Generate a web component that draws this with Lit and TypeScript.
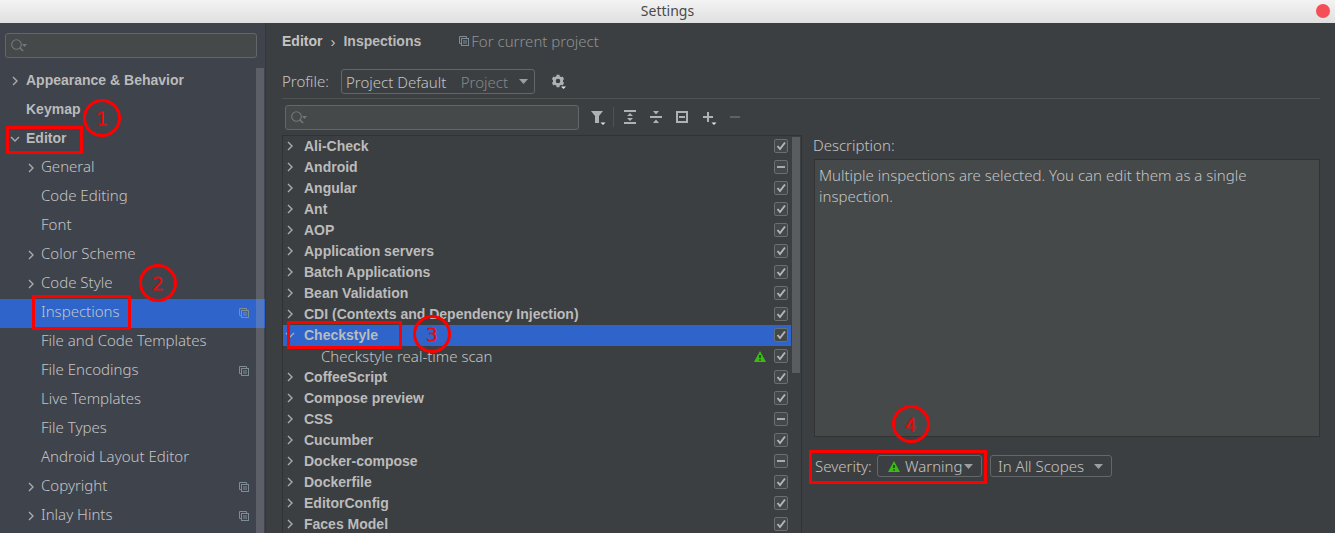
import { LitElement, html, css, svg, nothing } from "lit";
import { customElement, property } from "lit/decorators.js";
import { classMap } from "lit/directives/class-map.js";
import { live } from "lit/directives/live.js";

type NavItem = { label: string; level: 0 | 1; arrow?: "right" | "down"; project?: boolean; selected?: boolean };
type Inspection = { label: string; arrow?: "right" | "down"; partial?: boolean; selected?: boolean; warning?: boolean };

const NAV: NavItem[] = [
  { label: "Appearance & Behavior", level: 0, arrow: "right" },
  { label: "Keymap", level: 0 },
  { label: "Editor", level: 0, arrow: "down" },
  { label: "General", level: 1, arrow: "right" },
  { label: "Code Editing", level: 1 },
  { label: "Font", level: 1 },
  { label: "Color Scheme", level: 1, arrow: "right" },
  { label: "Code Style", level: 1, arrow: "right" },
  { label: "Inspections", level: 1, project: true, selected: true },
  { label: "File and Code Templates", level: 1 },
  { label: "File Encodings", level: 1, project: true },
  { label: "Live Templates", level: 1 },
  { label: "File Types", level: 1 },
  { label: "Android Layout Editor", level: 1 },
  { label: "Copyright", level: 1, arrow: "right", project: true },
  { label: "Inlay Hints", level: 1, arrow: "right", project: true },
];

const INSPECTIONS: Inspection[] = [
  { label: "Ali-Check", arrow: "right" },
  { label: "Android", arrow: "right", partial: true },
  { label: "Angular", arrow: "right" },
  { label: "Ant", arrow: "right" },
  { label: "AOP", arrow: "right" },
  { label: "Application servers", arrow: "right" },
  { label: "Batch Applications", arrow: "right" },
  { label: "Bean Validation", arrow: "right" },
  { label: "CDI (Contexts and Dependency Injection)", arrow: "right" },
  { label: "Checkstyle", arrow: "down", selected: true },
  { label: "Checkstyle real-time scan", warning: true },
  { label: "CoffeeScript", arrow: "right" },
  { label: "Compose preview", arrow: "right" },
  { label: "CSS", arrow: "right", partial: true },
  { label: "Cucumber", arrow: "right" },
  { label: "Docker-compose", arrow: "right", partial: true },
  { label: "Dockerfile", arrow: "right" },
  { label: "EditorConfig", arrow: "right" },
  { label: "Faces Model", arrow: "right" },
];

const icon = (w: number, h: number, body: unknown) =>
  html`<svg width=${w} height=${h} viewBox="0 0 ${w} ${h}" aria-hidden="true">${body}</svg>`;

const chevron = (dir: "right" | "down") =>
  icon(10, 10, svg`<path d=${dir === "right" ? "M3 1l4 4-4 4" : "M1 3l4 4 4-4"} fill="none" stroke="#a9abad" stroke-width="1.4"/>`);

const copyIcon = () =>
  icon(10, 10, svg`<g fill="none" stroke="#7f8b95"><path d="M2 7.5H.5v-7h7V2"/><rect x="2.5" y="2.5" width="7" height="7"/><path d="M4 5h4M4 7h4"/></g>`);

const searchIcon = () =>
  icon(17, 13, svg`<circle cx="5.5" cy="5.5" r="4.8" fill="none" stroke="#72797c" stroke-width="1.1"/><path d="M9 9l3 3" stroke="#72797c" stroke-width="1.6"/><path d="M11 5h5l-2.5 3z" fill="#72797c"/>`);

const warningIcon = () =>
  icon(12, 11, svg`<path d="M6 0l6 11H0z" fill="#3dbb15"/><path d="M6 4v3M6 8.3v1.5" stroke="#234d18" stroke-width="1.8"/>`);

const gearIcon = () =>
  icon(16, 16, svg`<g fill="none" stroke="#afb1b3"><circle cx="7" cy="7" r="3.7" stroke-width="2.8"/><path d="M7 .8v2M7 11.2v2M1.6 3.9l1.8 1M10.6 9.1l1.8 1M1.6 10.1l1.8-1M10.6 4.900l1.8-1" stroke-width="3"/></g><path d="M10 12.500h5l-2.500 2.500z" fill="#e3e4e5"/>`);

const filterIcon = () =>
  icon(16, 16, svg`<path d="M1 2h12L9 7v7H5V7z" fill="#afb1b3"/><path d="M10.500 13.500h5L13 16z" fill="#e3e4e5"/>`);

const expandIcon = () =>
  icon(14, 14, svg`<path d="M1 1h12M1 13h12" stroke="#afb1b3" stroke-width="2"/><path d="M7 3l3 3H4zM7 11l3-3H4z" fill="#afb1b3"/>`);

const collapseIcon = () =>
  icon(14, 14, svg`<path d="M1 7h12" stroke="#afb1b3" stroke-width="2"/><path d="M7 4.500l3-3.500H4zM7 9.500l3 3.500H4z" fill="#afb1b3"/>`);

const resetIcon = () =>
  icon(14, 14, svg`<rect x="2" y="2" width="10" height="10" fill="none" stroke="#afb1b3" stroke-width="2"/><path d="M4 7h6" stroke="#afb1b3" stroke-width="2"/>`);

const addIcon = () =>
  icon(16, 16, svg`<path d="M2 8h10M7 3v10" stroke="#afb1b3" stroke-width="2"/><path d="M10.500 13.500h5L13 16z" fill="#e3e4e5"/>`);

const removeIcon = () => icon(12, 12, svg`<path d="M1 6h10" stroke="#5f6263" stroke-width="2"/>`);

const caret = () => icon(9, 5, svg`<path d="M0 0h9L4.500 5z" fill="#9c9fa1"/>`);

@customElement("search-field")
class SearchField extends LitElement {
  @property() label = "Search";

  static styles = css`
    :host { display: block; }
    .field {
      display: flex;
      align-items: center;
      box-sizing: border-box;
      height: 25px;
      padding: 0 5px;
      border: 1px solid #646769;
      border-radius: 3px;
      background: #45494a;
    }
    input {
      flex: 1;
      min-width: 0;
      padding: 0 4px;
      border: 0;
      outline: 0;
      background: none;
      color: #bbbbbb;
      font: 300 15px "Noto Sans", sans-serif;
    }
  `;

  render() {
    return html`<div class="field">${searchIcon()}<input type="text" aria-label=${this.label} /></div>`;
  }
}

@customElement("select-box")
class SelectBox extends LitElement {
  @property() label = "";
  @property() value = "";
  @property() note = "";
  @property({ type: Boolean }) warning = false;

  static styles = css`
    :host { display: grid; align-items: center; height: 100%; }
    select, .overlay { grid-area: 1 / 1; }
    select {
      appearance: none;
      box-sizing: border-box;
      width: 100%;
      height: 100%;
      padding: 0 18px 0 7px;
      border: 1px solid #646769;
      border-radius: 3px;
      outline: 0;
      background: #3c3f41;
      color: #c4c4c4;
      font: 300 15px "Noto Sans", sans-serif;
    }
    .warning { padding-left: 27px; }
    .noted { padding-left: 4px; padding-right: 80px; }
    .overlay {
      display: flex;
      align-items: center;
      padding: 0 9px 0 11px;
      pointer-events: none;
    }
    .note { margin-left: auto; margin-right: 11px; color: #85888a; font: 300 15px "Noto Sans", sans-serif; }
    .caret { display: flex; margin-left: auto; }
    .note + .caret { margin-left: 0; }
    .overlay.wide { padding-right: 7px; }
  `;

  render() {
    return html`
      <select class=${classMap({ warning: this.warning, noted: !!this.note })} aria-label=${this.label}>
        <option>${this.value}</option>
      </select>
      <span class=${classMap({ overlay: true, wide: !!this.note })}>
        ${this.warning ? warningIcon() : nothing}
        ${this.note ? html`<span class="note">${this.note}</span>` : nothing}
        <span class="caret">${caret()}</span>
      </span>
    `;
  }
}

@customElement("step-marker")
class StepMarker extends LitElement {
  @property({ type: Number }) step = 1;

  static styles = css`
    :host {
      display: flex;
      align-items: center;
      justify-content: center;
      box-sizing: border-box;
      width: 38px;
      height: 38px;
      border: 3px solid #ff0000;
      border-radius: 50%;
      color: #e60c0c;
      font: 200 18px "DejaVu Sans", sans-serif;
      -webkit-text-stroke: 1px #e60c0c;
    }
  `;

  render() {
    return html`${this.step}`;
  }
}

@customElement("app-root")
class AppRoot extends LitElement {
  static styles = css`
    :host {
      display: flex;
      flex-direction: column;
      height: 100vh;
      overflow: hidden;
      background: #3c3f41;
      color: #c4c4c4;
      font: 300 15px/21px "Noto Sans", sans-serif;
    }
    svg { display: block; }
    .titlebar {
      display: grid;
      grid-template-columns: 1fr auto 1fr;
      align-items: center;
      height: 23px;
      padding: 0 5px 2px;
      box-sizing: border-box;
      flex: none;
      background: linear-gradient(#f3f3f3, #e0e0e0);
      color: #4a4a4a;
      font: 400 14px/20px "Noto Sans", sans-serif;
    }
    .title { grid-column: 2; margin: 0; font: inherit; }
    .close {
      justify-self: end;
      width: 14px;
      height: 14px;
      padding: 0;
      border: 0;
      border-radius: 50%;
      background: #f54e56;
    }
    .body { display: flex; flex: 1; min-height: 0; }

    .sidebar {
      display: flex;
      flex-direction: column;
      box-sizing: border-box;
      flex: none;
      width: 266px;
      border-right: 1px solid #36393b;
      background: #3f434c;
    }
    .sidebar search-field { margin: 10px 8px 9px 5px; }
    .nav { position: relative; flex: 1; min-height: 0; }
    .nav-list { margin: 0; padding: 0; height: 100%; overflow: hidden; list-style: none; }
    .nav-link {
      display: flex;
      align-items: center;
      box-sizing: border-box;
      height: 29px;
      padding: 0 16px 4px 10px;
      color: inherit;
      text-decoration: none;
      white-space: nowrap;
    }
    .nav-link.child { padding-left: 26px; }
    .nav-link.strong { padding-bottom: 2px; }
    .nav-link.selected { background: #2f65ca; }
    .strong { font: 700 14px/21px "Liberation Sans", sans-serif; color: #bbbbbb; }
    .twisty { display: flex; flex: none; width: 16px; }
    .child .twisty { width: 15px; padding-top: 2px; }
    .project { margin-left: auto; padding-top: 2px; }
    .thumb { position: absolute; background: #a0a2a64d; }
    .nav-thumb { top: 1px; bottom: 0; right: 1px; width: 8px; }

    .main {
      display: flex;
      flex-direction: column;
      flex: 1;
      min-width: 0;
      padding: 0 15px 0 16px;
    }
    .crumbs { display: flex; align-items: center; height: 36px; }
    .crumb { color: inherit; text-decoration: none; }
    .crumb-sep { padding: 0 8px; font: 400 15px/21px "Liberation Sans", sans-serif; }
    .scope { display: flex; align-items: center; gap: 2px; margin-left: 38px; color: #8f9294; }
    .profile {
      display: flex;
      align-items: center;
      height: 25px;
      padding: 10px 0 4px;
      border-bottom: 1px solid #515151;
    }
    .profile-label { width: 59px; flex: none; }
    .profile-select { width: 194px; }
    .tool {
      display: flex;
      padding: 0;
      border: 0;
      background: none;
    }
    .gear { margin-left: 16px; }

    .columns { display: grid; grid-template-columns: 520fr 507fr; gap: 11px; flex: 1; min-height: 0; }
    .left { display: flex; flex-direction: column; min-height: 0; }
    .toolbar { display: flex; align-items: center; flex: none; height: 36px; padding-left: 3px; }
    .toolbar search-field { flex: none; width: 294px; }
    .filter { margin-left: 11px; }
    .sep { width: 1px; height: 20px; margin: 0 9px 0 7px; background: #515151; }
    .actions { display: flex; align-items: center; gap: 12px; }
    .tree {
      position: relative;
      flex: 1;
      min-height: 0;
      border: 1px solid #323232;
      border-bottom: 0;
    }
    .tree-list { margin: 0; padding: 0; height: 100%; overflow: hidden; list-style: none; }
    .tree-row {
      display: flex;
      align-items: center;
      box-sizing: border-box;
      height: 21px;
      margin-right: 10px;
      padding: 0 3px 1px 2px;
      white-space: nowrap;
    }
    .tree-row.selected { background: #2f65ca; }
    .tree-row .twisty { width: 19px; }
    .tree-row.leaf { padding-left: 38px; }
    .tree-row label { flex: 1; }
    .tree-row svg { flex: none; }
    .check {
      appearance: none;
      flex: none;
      box-sizing: border-box;
      width: 14px;
      height: 14px;
      margin: 0 0 0 8px;
      border: 1px solid #6b6e70;
      border-radius: 2px;
      background: #43494a center / 12px 12px no-repeat;
    }
    .check:checked {
      background-image: url("data:image/svg+xml,%3Csvg xmlns='http://www.w3.org/2000/svg' viewBox='0 0 12 12'%3E%3Cpath d='M2.500 6l2.500 3L10 2.500' fill='none' stroke='%23b4b6b7' stroke-width='1.900'/%3E%3C/svg%3E");
    }
    .check:indeterminate {
      background-image: url("data:image/svg+xml,%3Csvg xmlns='http://www.w3.org/2000/svg' viewBox='0 0 12 12'%3E%3Cpath d='M2 6h8' stroke='%23a7a9ab' stroke-width='2'/%3E%3C/svg%3E");
    }
    .tree-thumb { top: 1px; right: 1px; width: 8px; height: 236px; }

    .right { display: flex; flex-direction: column; min-height: 0; padding: 36px 0 56px; }
    .description {
      box-sizing: border-box;
      flex: 1;
      min-height: 0;
      margin: 3px 0 0 1px;
      padding: 5px 4px;
      border: 1px solid #323232;
      outline: 0;
      resize: none;
      background: #45494a;
      color: inherit;
      font: inherit;
    }
    .severity-row { position: relative; display: flex; align-items: center; height: 22px; margin-top: 18px; padding-left: 2px; }
    .severity-label { width: 62px; flex: none; }
    .severity-select { width: 105px; }
    .scope-select { width: 122px; margin-left: 8px; }

    .outline {
      position: absolute;
      box-sizing: border-box;
      border: 3px solid #ff0000;
      pointer-events: none;
    }
    step-marker { position: absolute; pointer-events: none; }
    .editor-outline { top: 59px; left: 6px; width: 77px; height: 28px; }
    .editor-step { top: 32px; left: 83px; }
    .inspections-outline { top: 228px; left: 32px; width: 99px; height: 35px; }
    .inspections-step { top: 197px; left: 139px; }
    .checkstyle-outline { top: 185px; left: 4px; width: 115px; height: 28px; }
    .checkstyle-step { top: 179px; left: 130px; }
    .severity-outline { top: -5px; left: -4px; width: 178px; height: 34px; }
    .severity-step { top: -50px; left: 79px; }
  `;

  private navItem(item: NavItem) {
    const classes = { "nav-link": true, child: item.level === 1, strong: item.level === 0, selected: !!item.selected };
    return html`
      <li>
        <a href="#" class=${classMap(classes)}>
          <span class="twisty">${item.arrow ? chevron(item.arrow) : nothing}</span>
          <span>${item.label}</span>
          ${item.project ? html`<span class="project">${copyIcon()}</span>` : nothing}
        </a>
      </li>
    `;
  }

  private inspection(item: Inspection, index: number) {
    const id = `inspection-${index}`;
    return html`
      <li class=${classMap({ "tree-row": true, selected: !!item.selected, leaf: !item.arrow })}>
        ${item.arrow ? html`<span class="twisty">${chevron(item.arrow)}</span>` : nothing}
        <label for=${id} class=${classMap({ strong: !!item.arrow })}>${item.label}</label>
        ${item.warning ? warningIcon() : nothing}
        <input id=${id} class="check" type="checkbox" .checked=${live(!item.partial)} .indeterminate=${!!item.partial} />
      </li>
    `;
  }

  render() {
    return html`
      <header class="titlebar">
        <h1 class="title">Settings</h1>
        <button class="close" aria-label="Close"></button>
      </header>
      <div class="body">
        <aside class="sidebar">
          <search-field label="Search settings"></search-field>
          <nav class="nav">
            <ul class="nav-list">${NAV.map((item) => this.navItem(item))}</ul>
            <div class="thumb nav-thumb"></div>
            <div class="outline editor-outline"></div>
            <step-marker class="editor-step" .step=${1}></step-marker>
            <div class="outline inspections-outline"></div>
            <step-marker class="inspections-step" .step=${2}></step-marker>
          </nav>
        </aside>
        <main class="main">
          <div class="crumbs">
            <a href="#" class="crumb strong">Editor</a>
            <span class="crumb-sep">›</span>
            <span class="strong">Inspections</span>
            <span class="scope">${copyIcon()}<span>For current project</span></span>
          </div>
          <div class="profile">
            <span class="profile-label">Profile:</span>
            <select-box class="profile-select" label="Profile" value="Project Default" note="Project"></select-box>
            <button class="tool gear" aria-label="Profile actions">${gearIcon()}</button>
          </div>
          <div class="columns">
            <section class="left">
              <div class="toolbar">
                <search-field label="Search inspections"></search-field>
                <button class="tool filter" aria-label="Filter inspections">${filterIcon()}</button>
                <span class="sep"></span>
                <div class="actions">
                  <button class="tool" aria-label="Expand all">${expandIcon()}</button>
                  <button class="tool" aria-label="Collapse all">${collapseIcon()}</button>
                  <button class="tool" aria-label="Reset to empty">${resetIcon()}</button>
                  <button class="tool" aria-label="Add inspection">${addIcon()}</button>
                  <button class="tool" aria-label="Remove inspection" disabled>${removeIcon()}</button>
                </div>
              </div>
              <div class="tree">
                <ul class="tree-list">${INSPECTIONS.map((item, i) => this.inspection(item, i))}</ul>
                <div class="thumb tree-thumb"></div>
                <div class="outline checkstyle-outline"></div>
                <step-marker class="checkstyle-step" .step=${3}></step-marker>
              </div>
            </section>
            <section class="right">
              <label for="description">Description:</label>
              <textarea id="description" class="description" readonly
                .value=${"Multiple inspections are selected. You can edit them as a single inspection."}></textarea>
              <div class="severity-row">
                <span class="severity-label">Severity:</span>
                <select-box class="severity-select" label="Severity" value="Warning" warning></select-box>
                <select-box class="scope-select" label="Scope" value="In All Scopes"></select-box>
                <div class="outline severity-outline"></div>
                <step-marker class="severity-step" .step=${4}></step-marker>
              </div>
            </section>
          </div>
        </main>
      </div>
    `;
  }
}
